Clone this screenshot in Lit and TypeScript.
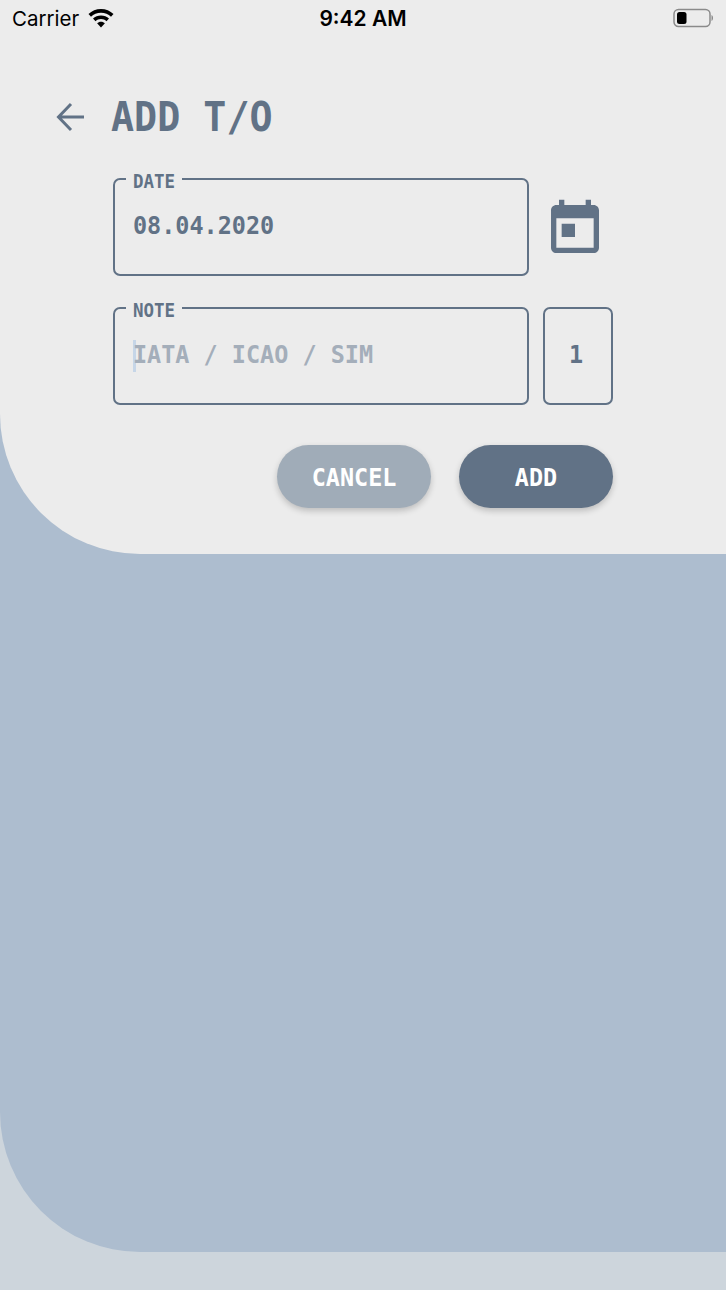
import { LitElement, html, css } from 'lit';
import { customElement } from 'lit/decorators.js';

@customElement('app-root')
export class AppRoot extends LitElement {
    static styles = css`
        :host {
            display: block;
            height: 1290px;
            background: #cdd5dc;
            font-family: "DejaVu Sans Mono", monospace;
            color: #617286;
        }
        .back-panel {
            height: 1252px;
            background: #adbdcf;
            border-bottom-left-radius: 140px;
        }
        .panel {
            height: 554px;
            box-sizing: border-box;
            background: #ececec;
            border-bottom-left-radius: 140px;
        }
        .status {
            display: grid;
            grid-template-columns: 1fr auto 1fr;
            align-items: center;
            height: 36px;
            padding: 0 12px;
            font-family: Inter, "Liberation Sans", sans-serif;
            font-size: 20.5px;
            color: #000;
        }
        .carrier { display: flex; align-items: center; gap: 9px; }
        .time { font-weight: 600; font-size: 21px; }
        .battery { justify-self: end; margin-right: 1px; display: block; }
        .head {
            display: flex;
            align-items: center;
            gap: 25px;
            height: 62px;
            margin-top: 50px;
            padding-left: 56px;
        }
        .head svg { display: block; }
        h1 {
            margin: 0;
            font-size: 41px;
            font-weight: 700;
            line-height: 44px;
        }
        h1 .narrow { transform: scaleX(0.935); }
        /* the reference font is narrower than DejaVu Mono, squeeze the glyphs */
        .narrow {
            display: inline-block;
            transform: scaleX(0.92);
            transform-origin: left center;
            white-space: nowrap;
        }
        form {
            display: flex;
            flex-direction: column;
            padding: 0 113px;
            margin-top: 30px;
        }
        .row {
            display: flex;
            align-items: stretch;
            height: 98px;
            margin-top: 31px;
        }
        .row:first-child { margin-top: 0; }
        .field {
            position: relative;
            box-sizing: border-box;
            flex: none;
            width: 416px;
            height: 98px;
            padding: 27px 0 0 17.5px;
            border: 2px solid #617286;
            border-radius: 7px;
            font-size: 25.5px;
            font-weight: 700;
            line-height: 36px;
        }
        .legend {
            position: absolute;
            top: -9px;
            left: 11px;
            padding: 0 7px;
            background: #ececec;
            font-size: 19px;
            line-height: 20px;
        }
        .legend .narrow { width: 42px; }
        .placeholder { color: #a4aeba; }
        .caret {
            position: absolute;
            left: 18px;
            top: 31px;
            width: 3px;
            height: 32px;
            background: #c6d6e8;
        }
        .pick { display: block; margin: 19px 0 0 14px; }
        .count {
            box-sizing: border-box;
            flex: none;
            width: 70px;
            margin-left: 14px;
            padding: 27px 0 0 24px;
            border: 2px solid #617286;
            border-radius: 7px;
            font-size: 25.5px;
            font-weight: 700;
            line-height: 36px;
        }
        .actions {
            display: flex;
            justify-content: flex-end;
            gap: 28px;
            margin-top: 40px;
        }
        button {
            width: 154px;
            height: 63px;
            padding: 0;
            border: 0;
            border-radius: 32px;
            color: #fff;
            font-family: inherit;
            font-size: 25.5px;
            font-weight: 700;
            box-shadow: 0 3px 6px rgba(0, 0, 0, 0.2);
        }
        button .narrow { transform-origin: center; }
        .cancel { background: #a0acb8; }
        .add { background: #617286; }
    `;

    render() {
        return html`
            <div class="back-panel">
                <div class="panel">
                    <div class="status">
                        <div class="carrier">
                            Carrier
                            <svg width="26" height="19" viewBox="0 0 26 19" fill="#000">
                                <path d="M13 0C8.200 0 3.800 1.900 0.500 5L3 7.700C5.600 5.200 9.100 3.700 13 3.700C16.900 3.700 20.400 5.200 23 7.700L25.500 5C22.200 1.900 17.800 0 13 0Z"/>
                                <path d="M13 6.400C9.900 6.400 7.100 7.600 5 9.600L7.500 12.200C8.900 10.900 10.900 10 13 10C15.100 10 17.100 10.900 18.500 12.200L21 9.600C18.900 7.600 16.100 6.400 13 6.400Z"/>
                                <path d="M13 12.700C11.500 12.700 10.100 13.300 9.100 14.300L13 18.500L16.900 14.300C15.900 13.300 14.500 12.700 13 12.700Z"/>
                            </svg>
                        </div>
                        <div class="time">9:42 AM</div>
                        <svg class="battery" width="40" height="20" viewBox="0 0 40 20">
                            <rect x="1" y="1.500" width="36" height="17" rx="4.500" fill="none" stroke="#8a8a8a" stroke-width="1.500"/>
                            <rect x="4" y="4" width="9.500" height="12" rx="2.500" fill="#000"/>
                            <path d="M38.500 7C39.600 7.600 40 8.700 40 10C40 11.300 39.600 12.400 38.500 13Z" fill="#8a8a8a"/>
                        </svg>
                    </div>
                    <div class="head">
                        <svg width="30" height="30" viewBox="0 0 30 30" fill="none" stroke="#617286" stroke-width="3">
                            <path d="M28 15H3M15 2L2.500 15L15 28"/>
                        </svg>
                        <h1><span class="narrow">ADD T/O</span></h1>
                    </div>
                    <form>
                        <div class="row">
                            <div class="field">
                                <span class="legend"><span class="narrow">DATE</span></span>
                                <span class="narrow">08.04.2020</span>
                            </div>
                            <svg class="pick" width="64" height="64" viewBox="0 0 24 24" fill="#617286">
                                <path d="M19 3h-1V1h-2v2H8V1H6v2H5c-1.110 0-1.990.9-1.990 2L3 19c0 1.100.89 2 2 2h14c1.100 0 2-.9 2-2V5c0-1.100-.9-2-2-2zm0 16H5V8h14v11zM7 10h5v5H7z"/>
                            </svg>
                        </div>
                        <div class="row">
                            <div class="field">
                                <span class="legend"><span class="narrow">NOTE</span></span>
                                <span class="caret"></span>
                                <span class="narrow placeholder">IATA / ICAO / SIM</span>
                            </div>
                            <div class="count"><span class="narrow">1</span></div>
                        </div>
                        <div class="actions">
                            <button type="button" class="cancel"><span class="narrow">CANCEL</span></button>
                            <button type="button" class="add"><span class="narrow">ADD</span></button>
                        </div>
                    </form>
                </div>
            </div>
        `;
    }
}
